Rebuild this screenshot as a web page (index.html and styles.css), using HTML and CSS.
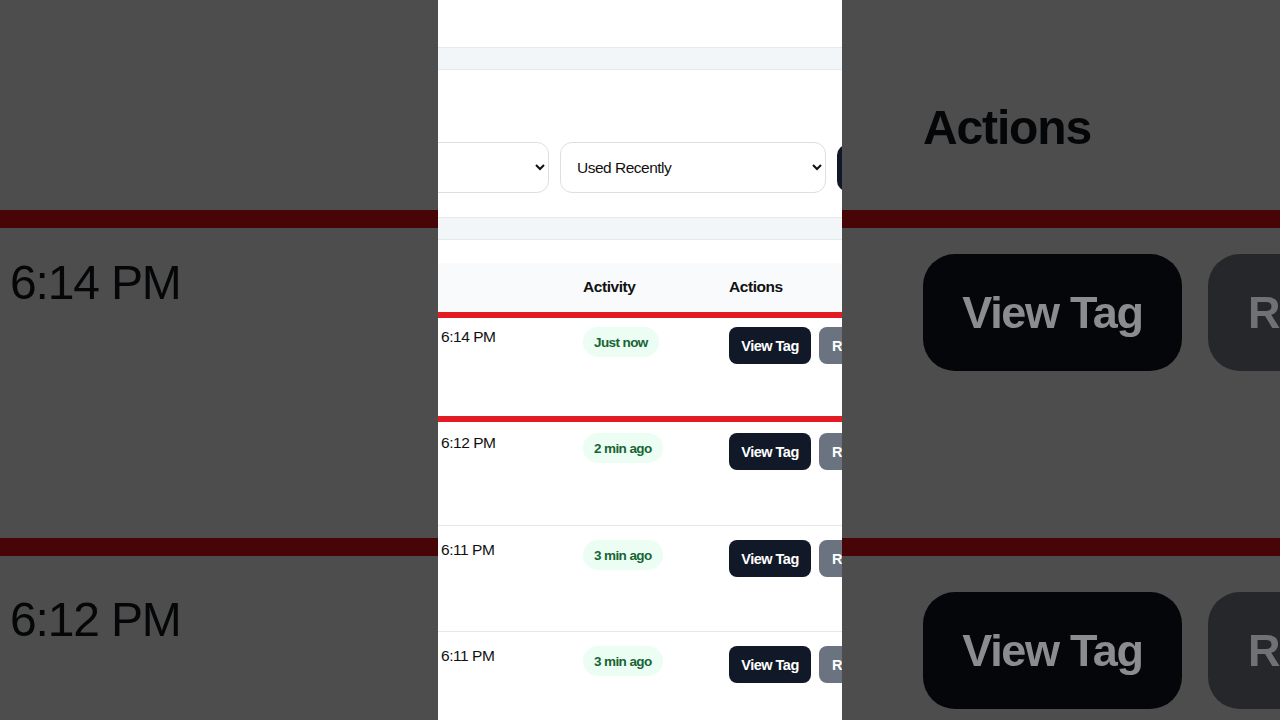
FILE: index.html
```html
<!DOCTYPE html>
<html lang="en">
<head>
    <meta charset="UTF-8">
    <meta name="viewport" content="width=device-width, initial-scale=1.0">
    <title>Tag Activity</title>
    <link rel="stylesheet" href="styles.css">
</head>
<body>

<div class="stage">

    <!-- Left blurred backdrop -->
    <div class="backdrop">
        <div class="zoom-head"></div>
        <div class="zoom-line"></div>
        <div class="zoom-row zoom-row-time"><span class="zoom-text">6:14 PM</span></div>
        <div class="zoom-line"></div>
        <div class="zoom-row zoom-row-next zoom-row-time"><span class="zoom-text">6:12 PM</span></div>
    </div>

    <!-- Phone column -->
    <div class="page">
        <div class="page-top"></div>
        <div class="strip"></div>

        <div class="filters">
            <select class="filter-select filter-first">
                <option>All Tags</option>
            </select>
            <select class="filter-select filter-second">
                <option>Used Recently</option>
            </select>
            <button class="filter-btn">Filter</button>
        </div>

        <div class="strip"></div>

        <div class="table">
            <div class="table-head">
                <div class="cell-time"></div>
                <div class="cell-activity">Activity</div>
                <div class="cell-actions">Actions</div>
            </div>

            <div class="table-row row-flagged">
                <div class="cell-time">6:14 PM</div>
                <div class="cell-activity"><span class="badge">Just now</span></div>
                <div class="cell-actions">
                    <button class="btn btn-dark">View Tag</button>
                    <button class="btn btn-gray">Remove</button>
                </div>
            </div>

            <div class="table-row row-after-flag">
                <div class="cell-time">6:12 PM</div>
                <div class="cell-activity"><span class="badge">2 min ago</span></div>
                <div class="cell-actions">
                    <button class="btn btn-dark">View Tag</button>
                    <button class="btn btn-gray">Remove</button>
                </div>
            </div>

            <div class="table-row">
                <div class="cell-time">6:11 PM</div>
                <div class="cell-activity"><span class="badge">3 min ago</span></div>
                <div class="cell-actions">
                    <button class="btn btn-dark">View Tag</button>
                    <button class="btn btn-gray">Remove</button>
                </div>
            </div>

            <div class="table-row">
                <div class="cell-time">6:11 PM</div>
                <div class="cell-activity"><span class="badge">3 min ago</span></div>
                <div class="cell-actions">
                    <button class="btn btn-dark">View Tag</button>
                    <button class="btn btn-gray">Remove</button>
                </div>
            </div>
        </div>
    </div>

    <!-- Right blurred backdrop -->
    <div class="backdrop backdrop-right">
        <div class="zoom-head zoom-head-title"><span class="zoom-text">Actions</span></div>
        <div class="zoom-line"></div>
        <div class="zoom-row">
            <span class="zoom-btn">View Tag</span>
            <span class="zoom-btn zoom-btn-gray">Remove</span>
        </div>
        <div class="zoom-line"></div>
        <div class="zoom-row zoom-row-next">
            <span class="zoom-btn">View Tag</span>
            <span class="zoom-btn zoom-btn-gray">Remove</span>
        </div>
    </div>

</div>

</body>
</html>
```

FILE: styles.css
```css
* {
    box-sizing: border-box;
}

html, body {
    margin: 0;
    height: 100%;
    overflow: hidden;
}

body {
    font-family: "Liberation Sans", Arial, sans-serif;
    color: #111;
    background: #4d4d4d;
}

.stage {
    display: flex;
    width: 1280px;
    height: 720px;
}

/* Blurred sides */
.backdrop {
    width: 438px;
    height: 720px;
    flex: none;
    overflow: hidden;
    background: #4d4d4d;
    color: #050608;
    font-size: 48px;
    line-height: 50px;
    letter-spacing: -1.15px;
}

.backdrop-right {
    flex: 1;
}

.zoom-text {
    display: block;
    filter: blur(0.6px);
}

.zoom-head {
    height: 210px;
}

.zoom-head-title {
    padding: 103px 0 0 81px;
    font-weight: bold;
    color: #050608;
}

.zoom-line {
    height: 18px;
    background: #470508;
}

.zoom-row {
    height: 310px;
    padding: 26px 0 0 81px;
    display: flex;
    gap: 26px;
    white-space: nowrap;
}

.zoom-row-next {
    padding-top: 36px;
}

.zoom-row-time {
    padding: 30px 0 0 10px;
}

.zoom-row-time.zoom-row-next {
    padding-top: 39px;
}

.zoom-btn {
    flex: none;
    width: 259px;
    height: 117px;
    border-radius: 32px;
    background: #05060a;
    color: #8b8c8e;
    font-size: 45px;
    font-weight: bold;
    line-height: 117px;
    text-align: center;
    letter-spacing: -1.3px;
    filter: blur(0.6px);
}

.zoom-btn-gray {
    padding-left: 40px;
    background: #25272b;
    color: #707174;
    text-align: left;
}

/* Center column */
.page {
    width: 404px;
    height: 720px;
    flex: none;
    overflow: hidden;
    background: #fff;
}

.page-top {
    height: 47px;
}

.strip {
    height: 23px;
    background: #f3f6f9;
    border-top: 1px solid #e5e8ec;
    border-bottom: 1px solid #e5e8ec;
}

.filters {
    display: flex;
    gap: 11px;
    align-items: center;
    height: 147px;
    padding-top: 48px;
    margin-left: -100px;
}

.filter-select {
    flex: none;
    height: 51px;
    padding: 0 12px;
    background: #fff;
    color: #111;
    border: 1px solid #dcdfe3;
    border-radius: 12px;
    font-family: inherit;
    font-size: 15.5px;
    letter-spacing: -0.5px;
}

.filter-first {
    width: 211px;
}

.filter-second {
    width: 266px;
}

.filter-btn {
    flex: none;
    width: 110px;
    height: 46px;
    background: #111827;
    color: #fff;
    border: none;
    border-radius: 10px;
    font-family: inherit;
    font-size: 15px;
    font-weight: bold;
}

.table {
    padding-top: 23px;
}

.table-head,
.table-row {
    display: grid;
    grid-template-columns: 142px 146px 1fr;
    padding-left: 3px;
    white-space: nowrap;
    letter-spacing: -0.45px;
}

.table-head {
    height: 49px;
    padding-bottom: 2px;
    align-items: center;
    background: #f8fafc;
    font-weight: bold;
    font-size: 15.5px;
}

.table-row {
    height: 106px;
    padding-top: 14px;
    border-top: 1px solid #e5e7eb;
    font-size: 15.5px;
    line-height: 19px;
}

.row-flagged {
    height: 110px;
    padding-top: 9px;
    border-top: 6px solid #e31b23;
    border-bottom: 6px solid #e31b23;
}

.row-after-flag {
    height: 103px;
    padding-top: 11px;
    border-top: none;
}

.cell-actions {
    display: flex;
    gap: 8px;
    align-items: flex-start;
}

.cell-time {
    color: #111;
}

.badge {
    display: inline-block;
    height: 30px;
    padding: 0 11px;
    border-radius: 15px;
    background: #ecfdf3;
    color: #166534;
    font-size: 13.5px;
    font-weight: bold;
    line-height: 31px;
    letter-spacing: -0.6px;
}

.btn {
    flex: none;
    height: 37px;
    padding: 0 13px;
    border: none;
    border-radius: 8px;
    color: #fff;
    font-family: inherit;
    font-size: 14.5px;
    font-weight: bold;
    letter-spacing: -0.5px;
}

.btn-dark {
    width: 82px;
    padding: 0;
    background: #111827;
}

.btn-gray {
    background: #6b7280;
}
```
